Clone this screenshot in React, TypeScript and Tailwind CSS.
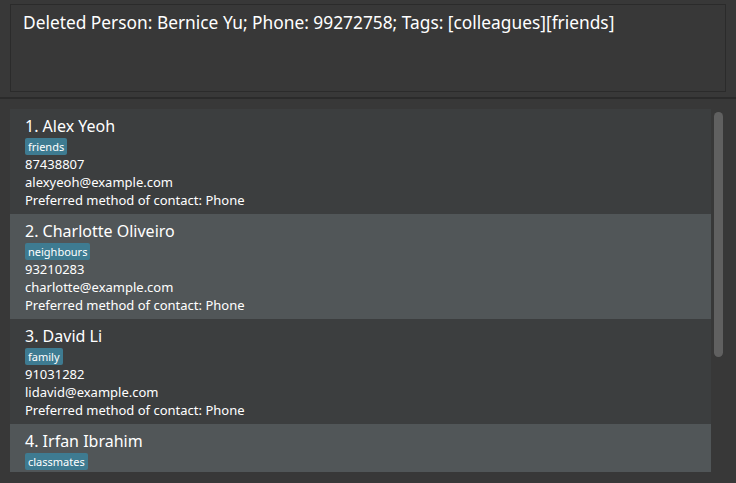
import React from "react";

const people = [
  { n: "1. Alex Yeoh", tag: "friends", phone: "87438807", email: "alexyeoh@example.com" },
  { n: "2. Charlotte Oliveiro", tag: "neighbours", phone: "93210283", email: "charlotte@example.com" },
  { n: "3. David Li", tag: "family", phone: "91031282", email: "lidavid@example.com" },
  { n: "4. Irfan Ibrahim", tag: "classmates", phone: "92492021", email: "irfan@example.com" },
];

export default function App() {
  return (
    <div
      className="w-[736px] h-[483px] bg-[#383838] flex flex-col overflow-hidden"
      style={{ fontFamily: '"Noto Sans", sans-serif' }}
    >
      <div className="h-[97px] shrink-0 pt-[4px] pl-[10px] pr-[10px]">
        <div className="h-[88px] border border-[#2b2b2b] bg-[#383838] pl-[12px] pt-[5px]">
          <div className="text-[17.33px] leading-[24px] text-white">
            Deleted Person: Bernice Yu; Phone: 99272758; Tags: [colleagues][friends]
          </div>
        </div>
      </div>
      <div className="h-[2px] shrink-0 bg-[#2b2b2b]" />
      <div className="flex-1 flex pl-[10px] pt-[10px] min-h-0">
        <div className="w-[701px] h-[363px] overflow-hidden flex flex-col shrink-0">
          {people.map((p, i) => (
            <div
              key={i}
              className={`h-[105px] shrink-0 pl-[15px] pt-[7px] ${i % 2 === 0 ? "bg-[#3c3e3f]" : "bg-[#515658]"}`}
            >
              <div className="text-[16px] leading-[20px] text-white">{p.n}</div>
              <div className="flex mt-[2px]">
                <span className="h-[17px] px-[3px] rounded-[2px] bg-[#3e7b91] text-white text-[11px] leading-[17px]">
                  {p.tag}
                </span>
              </div>
              {i < 3 && (
                <>
                  <div className="text-[13px] leading-[18px] text-white">{p.phone}</div>
                  <div className="text-[13px] leading-[18px] text-white">{p.email}</div>
                  <div className="text-[13px] leading-[18px] text-white">Preferred method of contact: Phone</div>
                </>
              )}
            </div>
          ))}
        </div>
        <div className="ml-[3px] mt-[3px] w-[9px] h-[245px] rounded-[5px] bg-[#606060]" />
      </div>
    </div>
  );
}
